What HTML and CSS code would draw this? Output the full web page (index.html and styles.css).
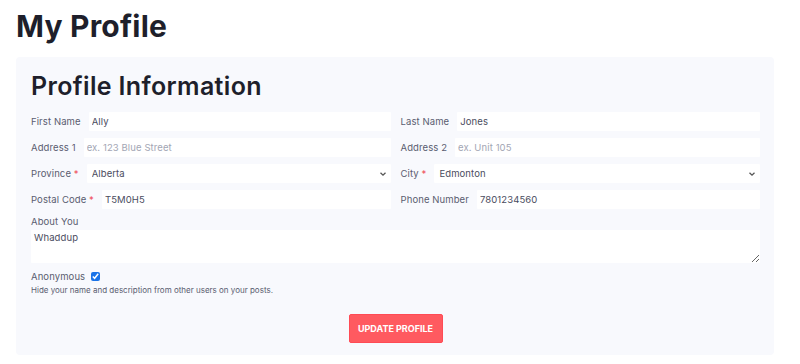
FILE: index.html
```html
<!DOCTYPE html>
<html lang="en">
<head>
<meta charset="utf-8">
<title>My Profile</title>
<link rel="stylesheet" href="styles.css">
</head>
<body>
<main class="page">
  <h1 class="page-title">My Profile</h1>
  <section class="card">
    <h2 class="card-title">Profile Information</h2>
    <form class="form">
      <div class="grid">
        <div class="field"><label>First Name</label><input class="control" type="text" value="Ally"></div>
        <div class="field"><label>Last Name</label><input class="control" type="text" value="Jones"></div>
        <div class="field"><label>Address 1</label><input class="control" type="text" placeholder="ex. 123 Blue Street"></div>
        <div class="field"><label>Address 2</label><input class="control" type="text" placeholder="ex. Unit 105"></div>
        <div class="field"><label>Province <span class="req">*</span></label><select class="control select"><option>Alberta</option></select></div>
        <div class="field"><label>City <span class="req">*</span></label><select class="control select"><option>Edmonton</option></select></div>
        <div class="field"><label>Postal Code <span class="req">*</span></label><input class="control" type="text" value="T5M0H5"></div>
        <div class="field"><label>Phone Number</label><input class="control" type="text" value="7801234560"></div>
      </div>
      <div class="about">
        <label class="about-label">About You</label>
        <textarea class="control textarea">Whaddup</textarea>
      </div>
      <div class="anon">
        <div class="anon-row"><label>Anonymous</label><input class="check" type="checkbox" checked></div>
        <p class="help">Hide your name and description from other users on your posts.</p>
      </div>
      <div class="actions"><button type="button" class="btn">UPDATE PROFILE</button></div>
    </form>
  </section>
</main>
</body>
</html>
```
FILE: styles.css
```css
* { box-sizing: border-box; }
html, body { margin: 0; padding: 0; background: #ffffff; }
body {
  font-family: "Inter", "Open Sans", sans-serif;
  color: #2c2e3e;
}
.page {
  padding: 6px 26px 0 16px;
  width: 800px;
}
.page-title {
  margin: 0;
  font-size: 30px;
  line-height: 40px;
  font-weight: 700;
  color: #1e1f2b;
  letter-spacing: 0.2px;
}
.card {
  margin-top: 11px;
  background: #f8f9fd;
  border-radius: 4px;
  padding: 15px 14px 12px 15px;
}
.card-title {
  margin: 0;
  font-size: 25px;
  line-height: 29px;
  font-weight: 600;
  color: #1e1f2b;
  letter-spacing: 0.35px;
}
.form { margin-top: 11px; }
.grid {
  display: grid;
  grid-template-columns: 1fr 1fr;
  column-gap: 10px;
  row-gap: 7px;
}
.field {
  display: flex;
  align-items: center;
  gap: 8px;
}
.field label, .about-label, .anon-row label {
  font-size: 9.5px;
  color: #5a5d70;
  white-space: nowrap;
  letter-spacing: 0.1px;
}
.req { color: #ef4f5a; }
.control {
  flex: 1;
  min-width: 0;
  height: 19px;
  border: none;
  background: #ffffff;
  font-family: inherit;
  font-size: 9.5px;
  color: #4a4c5e;
  padding: 0 3px;
  outline: none;
  border-radius: 1px;
  letter-spacing: 0.1px;
}
.control::placeholder { color: #a3a6b4; }
.select {
  appearance: none;
  -webkit-appearance: none;
  padding-left: 5px;
  background: #ffffff url("data:image/svg+xml;utf8,<svg xmlns='http://www.w3.org/2000/svg' width='8' height='6' viewBox='0 0 8 6'><path d='M1.5 1.8 L4 4.2 L6.5 1.8' fill='none' stroke='%23555' stroke-width='1.3'/></svg>") no-repeat right 4px center;
}
.about { margin-top: 7px; display: flex; flex-direction: column; gap: 3px; }
.textarea {
  flex: none;
  width: 100%;
  height: 33px;
  padding: 2px 3px;
  resize: vertical;
  display: block;
}
.anon { margin-top: 8px; }
.anon-row { display: flex; align-items: center; gap: 6px; }
.check {
  margin: 0;
  width: 9px;
  height: 9px;
  accent-color: #1a73e8;
}
.help {
  margin: 3px 0 0 0;
  font-size: 8px;
  color: #5a5d70;
  letter-spacing: 0;
}
.actions {
  display: flex;
  justify-content: center;
  margin-top: 19px;
}
.btn {
  width: 94px;
  height: 29px;
  background: #ff5a60;
  color: #ffffff;
  border: 1px solid #ff4b55;
  border-radius: 2px;
  font-family: inherit;
  font-size: 9px;
  font-weight: 700;
  padding: 0;
}
```
